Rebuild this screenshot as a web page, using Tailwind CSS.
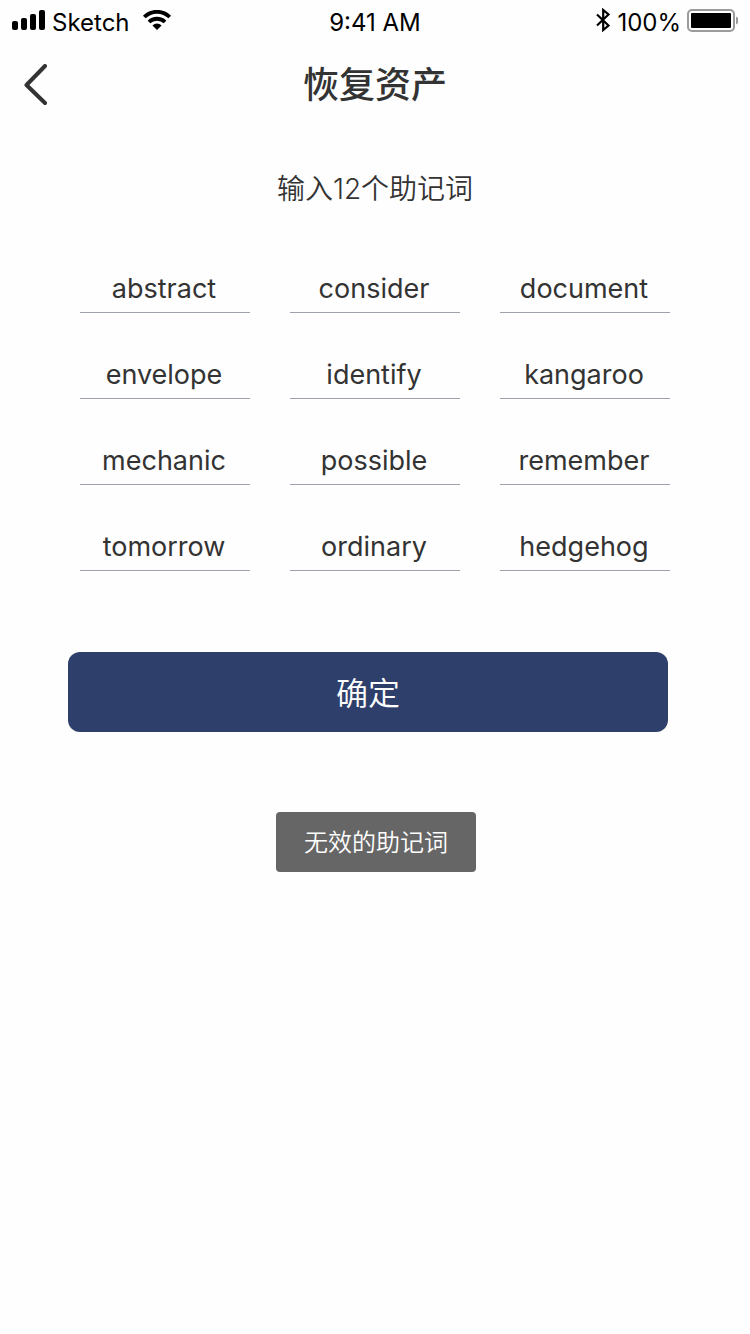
<!DOCTYPE html>
<html lang="zh-CN">
<head>
<meta charset="utf-8">
<meta name="viewport" content="width=device-width, initial-scale=1">
<title>恢复资产</title>
<script src="https://cdn.jsdelivr.net/npm/@tailwindcss/browser@4"></script>
</head>
<body class="min-h-screen bg-[#fefefe] font-[Inter,'Noto_Sans_CJK_SC',sans-serif] text-[#333333]">
<div class="grid h-10 grid-cols-3 items-center px-3 text-2xl text-black">
  <div class="flex items-center">
    <svg class="h-5 w-[33px]" viewBox="0 0 33 20" aria-hidden="true"><rect x="0" y="11" width="6" height="9" rx="2"/><rect x="9" y="8" width="6" height="12" rx="2"/><rect x="18" y="4" width="6" height="16" rx="2"/><rect x="27" y="0" width="6" height="20" rx="2"/></svg>
    <span class="mt-1.5 ml-[7px]">Sketch</span>
    <svg class="ml-3 h-5 w-[30px]" viewBox="0 0 28 20" aria-hidden="true"><g fill="none" stroke="#000" stroke-width="3.8"><path d="M1.300 7a18 18 0 0 1 25.400 0"/><path d="M6 12a11.500 11.500 0 0 1 16 0"/></g><path d="M14 20l-4.600-4.600a6.500 6.500 0 0 1 9.200 0z"/></svg>
  </div>
  <div class="mt-1.5 text-center">9:41 AM</div>
  <div class="flex items-center justify-end">
    <svg class="h-6 w-[14px]" viewBox="0 0 14 24" fill="none" stroke="#000" stroke-width="2.200" aria-hidden="true"><path d="M1 6.500 12.500 17.500 7.200 22V2l5.300 4.500L1 17.500"/></svg>
    <span class="mt-1.5 ml-[7px]">100%</span>
    <svg class="ml-1.5 h-6 w-[51px]" viewBox="0 0 51 24" aria-hidden="true"><rect x="1" y="2" width="46" height="21" rx="4" fill="none" stroke="#9b9b9b" stroke-width="2"/><rect x="4" y="5" width="40" height="15" rx="1"/><path d="M49 8.500q3 1.500 3 4t-3 4z" fill="#9b9b9b"/></svg>
  </div>
</div>
<header class="grid h-[90px] grid-cols-[72px_1fr_72px] items-center">
  <button type="button" aria-label="返回" class="pl-6"><svg class="h-[42px] w-6" viewBox="0 0 24 42" fill="none" stroke="#333" stroke-width="4" stroke-linecap="round" stroke-linejoin="round" aria-hidden="true"><path d="M21 2 2.500 21l18.500 18"/></svg></button>
  <h1 class="text-center text-4xl font-medium">恢复资产</h1>
</header>
<main>
  <form>
    <fieldset class="px-20 pt-[39px]">
      <legend class="contents"><span class="block text-center text-[28px] leading-10 font-[350]">输入12个助记词</span></legend>
      <div class="mt-[54px] grid grid-cols-3 gap-x-10 gap-y-9 text-[27px]">
        <input aria-label="助记词 1" value="abstract" class="h-[50px] w-full min-w-0 border-b border-[#9ea2ae] pt-0.5 pr-0.5 text-center">
        <input aria-label="助记词 2" value="consider" class="h-[50px] w-full min-w-0 border-b border-[#9ea2ae] pt-0.5 pr-0.5 text-center">
        <input aria-label="助记词 3" value="document" class="h-[50px] w-full min-w-0 border-b border-[#9ea2ae] pt-0.5 pr-0.5 text-center">
        <input aria-label="助记词 4" value="envelope" class="h-[50px] w-full min-w-0 border-b border-[#9ea2ae] pt-0.5 pr-0.5 text-center">
        <input aria-label="助记词 5" value="identify" class="h-[50px] w-full min-w-0 border-b border-[#9ea2ae] pt-0.5 pr-0.5 text-center">
        <input aria-label="助记词 6" value="kangaroo" class="h-[50px] w-full min-w-0 border-b border-[#9ea2ae] pt-0.5 pr-0.5 text-center">
        <input aria-label="助记词 7" value="mechanic" class="h-[50px] w-full min-w-0 border-b border-[#9ea2ae] pt-0.5 pr-0.5 text-center">
        <input aria-label="助记词 8" value="possible" class="h-[50px] w-full min-w-0 border-b border-[#9ea2ae] pt-0.5 pr-0.5 text-center">
        <input aria-label="助记词 9" value="remember" class="h-[50px] w-full min-w-0 border-b border-[#9ea2ae] pt-0.5 pr-0.5 text-center">
        <input aria-label="助记词 10" value="tomorrow" class="h-[50px] w-full min-w-0 border-b border-[#9ea2ae] pt-0.5 pr-0.5 text-center">
        <input aria-label="助记词 11" value="ordinary" class="h-[50px] w-full min-w-0 border-b border-[#9ea2ae] pt-0.5 pr-0.5 text-center">
        <input aria-label="助记词 12" value="hedgehog" class="h-[50px] w-full min-w-0 border-b border-[#9ea2ae] pt-0.5 pr-0.5 text-center">
      </div>
    </fieldset>
    <div class="mt-[81px] pr-[82px] pl-[68px]">
      <button type="button" class="h-20 w-full rounded-xl bg-[#2f3f6b] pt-1 text-[32px] font-[350] text-white">确定</button>
    </div>
  </form>
  <div class="mt-20 flex justify-center pl-0.5">
    <p role="alert" class="flex h-[60px] items-center rounded bg-[#666666] px-7 pt-0.5 text-2xl font-[350] text-white">无效的助记词</p>
  </div>
</main>
</body>
</html>
